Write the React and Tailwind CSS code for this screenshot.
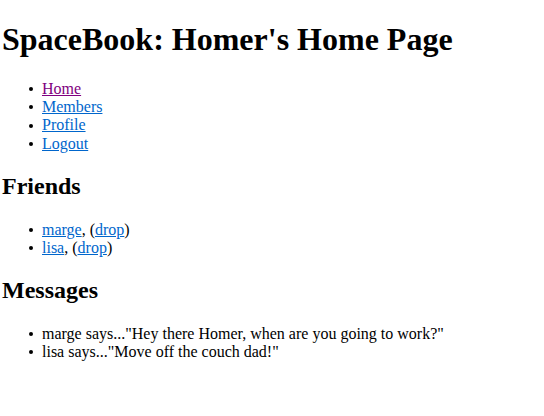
function Li({ children }) {
  return (
    <li className="flex items-center">
      <span className="w-[4px] h-[4px] rounded-full bg-black mr-[9px] shrink-0" />
      <span>{children}</span>
    </li>
  );
}

export default function App() {
  const link = "text-[#0066cc] underline";
  const ul = "list-none pl-[27px] my-4 text-base leading-[1.149]";
  return (
    <div className="bg-white text-black px-[2px] pb-4" style={{ fontFamily: '"Liberation Serif", "Times New Roman", serif' }}>
      <h1 className="text-[32px] font-bold leading-[1.149] mt-[21.44px] mb-[21.44px]">SpaceBook: Homer's Home Page</h1>
      <ul className={ul}>
        <Li><a href="#" className="text-[#800080] underline">Home</a></Li>
        <Li><a href="#" className={link}>Members</a></Li>
        <Li><a href="#" className={link}>Profile</a></Li>
        <Li><a href="#" className={link}>Logout</a></Li>
      </ul>
      <h2 className="text-2xl font-bold leading-[1.149] my-[19.92px]">Friends</h2>
      <ul className={ul}>
        <Li><a href="#" className={link}>marge</a>, (<a href="#" className={link}>drop</a>)</Li>
        <Li><a href="#" className={link}>lisa</a>, (<a href="#" className={link}>drop</a>)</Li>
      </ul>
      <h2 className="text-2xl font-bold leading-[1.149] my-[19.92px]">Messages</h2>
      <ul className={ul}>
        <Li>marge says..."Hey there Homer, when are you going to work?"</Li>
        <Li>lisa says..."Move off the couch dad!"</Li>
      </ul>
    </div>
  );
}
